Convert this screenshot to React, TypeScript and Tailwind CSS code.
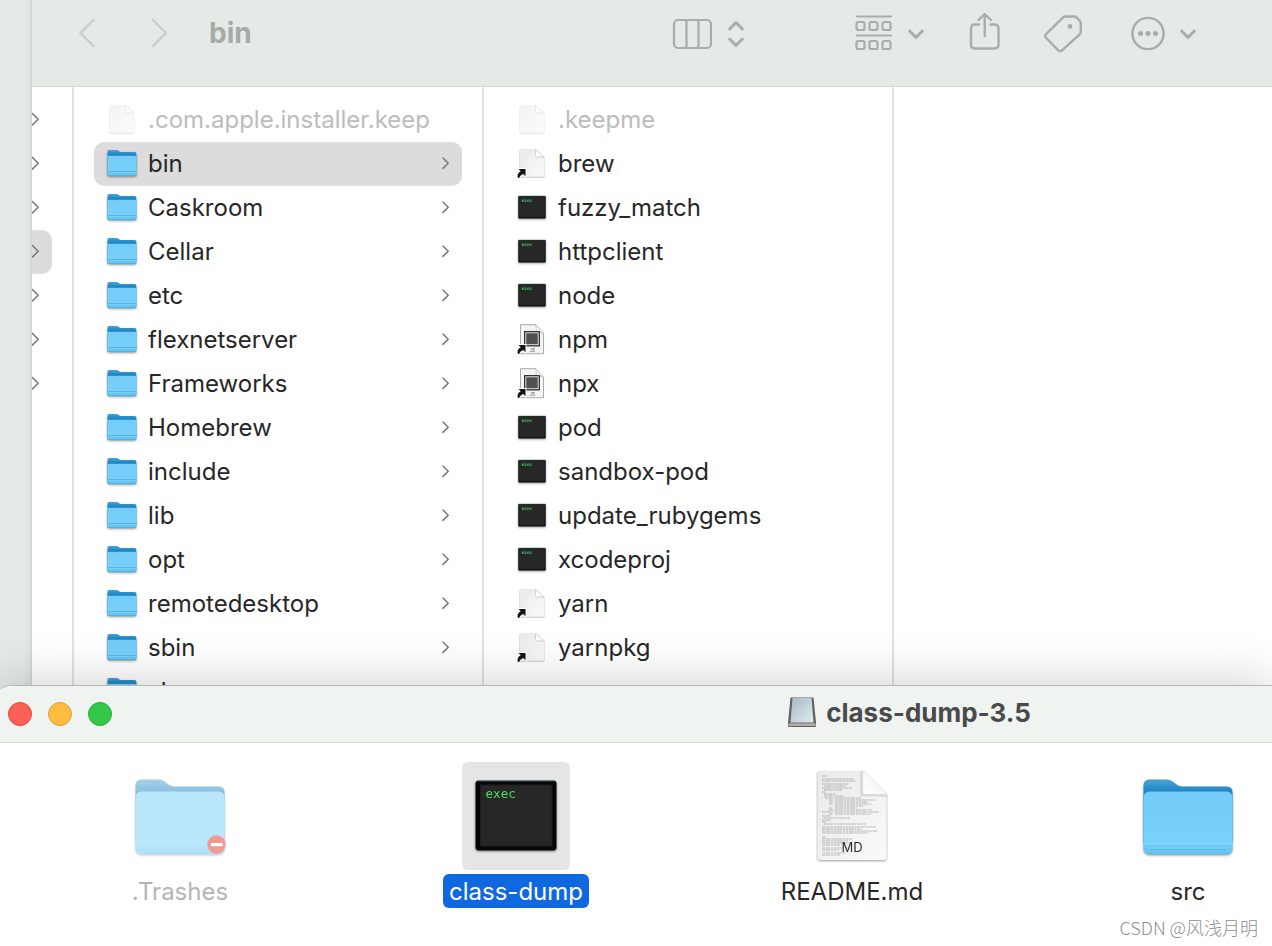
import React, { useState } from 'react';
import clsx from 'clsx';

type Kind = 'folder' | 'doc' | 'alias' | 'exec' | 'js';
type Entry = { name: string; kind: Kind; muted?: boolean };

const folders = [
  'bin', 'Caskroom', 'Cellar', 'etc', 'flexnetserver', 'Frameworks', 'Homebrew',
  'include', 'lib', 'opt', 'remotedesktop', 'sbin', 'share',
];

const parentEntries: Entry[] = [
  { name: '.com.apple.installer.keep', kind: 'doc', muted: true },
  ...folders.map((name) => ({ name, kind: 'folder' as Kind })),
];

const binEntries: Entry[] = [
  { name: '.keepme', kind: 'doc', muted: true },
  { name: 'brew', kind: 'alias' },
  { name: 'fuzzy_match', kind: 'exec' },
  { name: 'httpclient', kind: 'exec' },
  { name: 'node', kind: 'exec' },
  { name: 'npm', kind: 'js' },
  { name: 'npx', kind: 'js' },
  { name: 'pod', kind: 'exec' },
  { name: 'sandbox-pod', kind: 'exec' },
  { name: 'update_rubygems', kind: 'exec' },
  { name: 'xcodeproj', kind: 'exec' },
  { name: 'yarn', kind: 'alias' },
  { name: 'yarnpkg', kind: 'alias' },
];

// text lines of the markdown thumbnail: x, y, width
const docLines = [
  [5, 5, 5], [5, 8, 32], [5, 10, 34], [5, 13, 27], [7, 15, 22], [5, 17, 30], [7, 19, 18],
  [5, 21, 3], [7, 23, 12], [7, 25, 20], [8, 27, 9], [18, 27, 26], [12, 29, 4], [18, 29, 40],
  [12, 31, 5], [18, 31, 33], [12, 33, 4], [18, 33, 36], [18, 35, 28], [12, 37, 3], [18, 37, 22],
  [12, 39, 5], [18, 39, 37], [5, 41, 11], [18, 41, 44], [12, 43, 4], [18, 43, 36], [5, 45, 9],
  [7, 47, 26], [5, 49, 9], [5, 51, 5], [7, 53, 42], [5, 56, 54], [5, 58, 40], [5, 60, 56],
  [5, 62, 47], [5, 66, 4], [5, 68, 30], [5, 70, 26], [5, 72, 28], [5, 74, 18], [5, 77, 20],
  [5, 79, 17], [5, 82, 24], [5, 84, 18],
];

function Gradients() {
  return (
    <svg className="absolute w-0 h-0" aria-hidden="true">
      <defs>
        <linearGradient id="folderBack" x1="0" y1="0" x2="0" y2="1">
          <stop offset="0" stopColor="#4ba4d3" />
          <stop offset="0.22" stopColor="#1580c4" />
          <stop offset="1" stopColor="#1580c4" />
        </linearGradient>
        <linearGradient id="folderFront" x1="0" y1="0" x2="0" y2="1">
          <stop offset="0" stopColor="#74cdf8" />
          <stop offset="0.85" stopColor="#78d1fa" />
          <stop offset="1" stopColor="#62bfee" />
        </linearGradient>
        <linearGradient id="paper" x1="0" y1="0" x2="1" y2="1">
          <stop offset="0" stopColor="#e9e9e9" />
          <stop offset="1" stopColor="#fafafa" />
        </linearGradient>
        <linearGradient id="fold" x1="0" y1="1" x2="1" y2="0">
          <stop offset="0" stopColor="#ffffff" />
          <stop offset="0.5" stopColor="#f7f7f7" />
          <stop offset="1" stopColor="#d0d0d0" />
        </linearGradient>
        <linearGradient id="drive" x1="0" y1="0" x2="1" y2="1">
          <stop offset="0" stopColor="#a9b9c2" />
          <stop offset="1" stopColor="#dcecf3" />
        </linearGradient>
      </defs>
    </svg>
  );
}

function FolderIcon() {
  return (
    <svg className="w-8 h-8 shrink-0 drop-shadow-[0_1px_1px_rgba(0,0,0,0.35)]" viewBox="0 0 32 32">
      <path d="M1.500 4q0-2 1.500-2h7.500q1 0 2 .8l.8.6q.8.600 2 .6h13.300q1.700 0 1.700 1.500V26H1.500z" fill="url(#folderBack)" />
      <path d="M1.500 8.700q0-1 1-1h26.800q1 0 1 1v17.800q0 1.500-1.500 1.500H3q-1.500 0-1.500-1.500z" fill="url(#folderFront)" />
      <path d="M1.500 23.500h28.800" stroke="#4dadde" strokeWidth="0.800" />
      <path d="M1.500 25.500h28.800" stroke="#5bb8e8" strokeWidth="0.600" />
      <path d="M1.700 26.500q.2 1.300 1.500 1.300h25.300q1.500 0 1.700-1.300" fill="none" stroke="#3595c8" strokeWidth="0.600" />
    </svg>
  );
}

function LargeFolderIcon({ locked }: { locked?: boolean }) {
  return (
    <svg className="w-27 h-27" viewBox="0 0 108 108">
      <g className={clsx('drop-shadow-[0_1px_1px_rgba(0,0,0,0.4)]', locked && 'opacity-50')}>
        <path d="M9.500 24q0-6.500 6-6.500h17q3.500 0 6 2l4 3q2.500 2 6 2h44q6 0 6 6v50h-89z" fill="url(#folderBack)" />
        <path d="M9.500 36q0-6.500 6-6.500h77q6 0 6 6.500v50q0 6.500-6 6.500h-77q-6 0-6-6.500z" fill="url(#folderFront)" />
        <path d="M9.500 84h89M9.500 87.500h89" stroke="#5fbcea" strokeWidth="0.800" />
      </g>
      {locked && (
        <g>
          <circle cx="90.500" cy="82.500" r="9.200" fill="#f29a92" />
          <rect x="85" y="81" width="11.500" height="3.200" fill="#fff" />
        </g>
      )}
    </svg>
  );
}

function DocIcon({ alias, muted }: { alias?: boolean; muted?: boolean }) {
  return (
    <svg className="w-8 h-8 shrink-0" viewBox="0 0 32 32">
      <g className={clsx('drop-shadow-[0_1px_0_rgba(0,0,0,0.2)]', muted && 'opacity-50')}>
        <path d="M3.500 2.700q0-1.500 1.500-1.500h14l9.500 8v18q0 1.500-1.500 1.500H5q-1.500 0-1.500-1.500z" fill="url(#paper)" stroke="#e2e2e2" strokeWidth="0.500" />
        <path d="M19.500 1.500V7.700q0 1.300 1.300 1.300h7.400z" fill="#fff" stroke="#c6c6c6" strokeWidth="0.800" />
      </g>
      {alias && <AliasArrow />}
    </svg>
  );
}

function AliasArrow() {
  return (
    <path d="M1.800 30q-1.200-4.500 2.900-6.800L2.500 21h7v7.200l-2.200-2.300q-3.300.8-4.200 4z" fill="#161616" stroke="#fff" strokeWidth="1.800" paintOrder="stroke" />
  );
}

function JsIcon() {
  return (
    <svg className="w-8 h-8 shrink-0" viewBox="0 0 32 32">
      <path d="M4.500.7h15l8 8.500v20.500h-23z" fill="#f4f4f4" stroke="#a2a2a2" strokeWidth="0.900" />
      <path d="M19.500.7q1.500 4 .5 7.500 4-.5 7.500 1z" fill="#fff" stroke="#b5b5b5" strokeWidth="0.700" />
      <rect x="8" y="7" width="16" height="15.500" fill="#343434" />
      <rect x="9.800" y="8.800" width="12.400" height="11.900" fill="#505050" stroke="#eeeeee" strokeWidth="0.900" />
      <text x="13.500" y="28" fontSize="4.600" fill="#555" fontFamily="Inter, sans-serif">JS</text>
      <AliasArrow />
    </svg>
  );
}

function ExecIcon() {
  return (
    <svg className="w-8 h-8 shrink-0 drop-shadow-[0_1px_1px_rgba(0,0,0,0.4)]" viewBox="0 0 32 32">
      <rect x="2.300" y="4" width="27.400" height="22.500" rx="0.500" fill="#0b0b0b" />
      <path d="M2.500 4h27" stroke="#6f8a91" strokeWidth="0.500" />
      <rect x="3.200" y="5" width="25.600" height="20.200" fill="#272727" />
      <text x="5.500" y="10" fontSize="4.600" fontWeight="bold" fill="#3fbf58" fontFamily="'DejaVu Sans Mono', monospace">exec</text>
    </svg>
  );
}

function LargeExecIcon() {
  return (
    <svg className="w-27 h-27 drop-shadow-[0_1px_1px_rgba(0,0,0,0.45)]" viewBox="0 0 108 108">
      <rect x="13.500" y="18.500" width="81" height="70" rx="3" fill="#070707" />
      <path d="M16 18.800h76" stroke="#7f9aa6" strokeWidth="0.800" />
      <rect x="18.500" y="23" width="71.500" height="61" fill="#272727" stroke="#1c1c1c" />
      <text x="23.500" y="36" fontSize="12.600" fill="#4edb69" fontFamily="'DejaVu Sans Mono', monospace">exec</text>
    </svg>
  );
}

function MarkdownIcon() {
  return (
    <svg className="w-27 h-27 drop-shadow-[0_1px_1px_rgba(0,0,0,0.4)]" viewBox="0 0 108 108">
      <path d="M19.500 12q0-3 3-3h42.500l23.500 23v63q0 3-3 3h-63q-3 0-3-3z" fill="url(#paper)" />
      {docLines.map(([x, y, w]) => (
        <path key={`${x}-${y}`} d={`M${19 + x} ${9 + y}h${w}`} stroke="#777" strokeWidth="0.800" strokeDasharray="3 0.500 5 0.700 2 0.500" opacity="0.600" />
      ))}
      <path d="M62 9h3l23.500 23v3L62 34z" fill="#c4c4c4" opacity="0.500" />
      <path d="M65 9l23.500 23H67.500q-2.500 0-2.500-2.500z" fill="url(#fold)" />
      <text x="54" y="90" fontSize="13" textAnchor="middle" fill="#2b2b2b" fontFamily="Inter, sans-serif">MD</text>
    </svg>
  );
}

function DriveIcon() {
  return (
    <svg className="w-8 h-8" viewBox="0 0 32 32">
      <path d="M4.500 0.500h23l2.500 25v3.500q0 1-1 1H3q-1 0-1-1v-3.500z" fill="#686064" />
      <path d="M6.500 1h19l2 24.500h-23z" fill="url(#drive)" />
      <path d="M2.500 26.300h27v2.700h-27z" fill="#b9aaa6" />
      <path d="M27.500 26.800v1.500" stroke="#4be05c" strokeWidth="1.500" />
    </svg>
  );
}

function EntryIcon({ kind, muted }: { kind: Kind; muted?: boolean }) {
  if (kind === 'folder') return <FolderIcon />;
  if (kind === 'exec') return <ExecIcon />;
  if (kind === 'js') return <JsIcon />;
  return <DocIcon alias={kind === 'alias'} muted={muted} />;
}

function RowChevron() {
  return (
    <svg className="w-3 h-4 shrink-0" viewBox="0 0 12 16" fill="none" stroke="#7c7c7c" strokeWidth="1.600" strokeLinecap="round" strokeLinejoin="round">
      <path d="M3 2l5.200 5.200L3 12.400" />
    </svg>
  );
}

function DownChevron() {
  return (
    <svg className="w-4 h-10" viewBox="0 0 16 40" fill="none" stroke="#a7ada8" strokeWidth="3" strokeLinecap="round" strokeLinejoin="round">
      <path d="M1.700 18L8 24.500l6.300-6.500" />
    </svg>
  );
}

function Toolbar() {
  return (
    <header className="flex items-start h-[87px] pt-[13px] pl-[47px] pr-[76px] bg-[#e5eae6] border-b border-[#d3d6d4]">
      <button aria-label="Back" className="w-4 h-10">
        <svg className="w-4 h-10" viewBox="0 0 16 40" fill="none" stroke="#cbd0cc" strokeWidth="2.500" strokeLinecap="round" strokeLinejoin="round">
          <path d="M14.500 7L1.500 20l13 13" />
        </svg>
      </button>
      <button aria-label="Forward" className="w-4 h-10 ml-14">
        <svg className="w-4 h-10" viewBox="0 0 16 40" fill="none" stroke="#cbd0cc" strokeWidth="2.500" strokeLinecap="round" strokeLinejoin="round">
          <path d="M2 7l13 13L2 33" />
        </svg>
      </button>
      <h1 className="flex-1 ml-[42px] text-[28px] leading-10 font-bold text-[#a6aba7]">bin</h1>

      <button aria-label="Column view" className="flex items-center gap-4">
        <svg className="w-10 h-10" viewBox="0 0 40 40" fill="none" stroke="#a7ada8" strokeWidth="2.200">
          <rect x="2" y="7" width="37" height="28" rx="4" />
          <path d="M14.500 7v28M26.500 7v28" />
        </svg>
        <svg className="w-4 h-10" viewBox="0 0 16 40" fill="none" stroke="#a7ada8" strokeWidth="3" strokeLinecap="round" strokeLinejoin="round">
          <path d="M1.700 16L8 9.500l6.300 6.500M1.700 26L8 32.500l6.300-6.500" />
        </svg>
      </button>

      <button aria-label="Group by" className="flex items-center gap-3.5 ml-[110px]">
        <svg className="w-10 h-10" viewBox="0 0 40 40" fill="none" stroke="#a7ada8" strokeWidth="2.200" strokeLinecap="round">
          <path d="M3 3.500h34M3 22.500h34" />
          <rect x="2.500" y="9" width="8" height="8" rx="1.800" />
          <rect x="15.500" y="9" width="8" height="8" rx="1.800" />
          <rect x="28.500" y="9" width="8" height="8" rx="1.800" />
          <rect x="2.500" y="28" width="8" height="8" rx="1.800" />
          <rect x="15.500" y="28" width="8" height="8" rx="1.800" />
          <rect x="28.500" y="28" width="8" height="8" rx="1.800" />
        </svg>
        <DownChevron />
      </button>

      <button aria-label="Share" className="ml-10">
        <svg className="w-10 h-10" viewBox="0 0 40 40" fill="none" stroke="#a7ada8" strokeWidth="2.400" strokeLinecap="round" strokeLinejoin="round">
          <path d="M15 11.500H11q-4 0-4 4v16q0 4 4 4h19.500q4 0 4-4v-16q0-4-4-4H26.500" />
          <path d="M20.700 23V1.500M14.500 7l6.200-6 6.200 6" />
        </svg>
      </button>

      <button aria-label="Tags" className="ml-10">
        <svg className="w-10 h-10" viewBox="0 0 40 40" fill="none" stroke="#a7ada8" strokeWidth="2.400" strokeLinejoin="round">
          <path d="M21.500 3.500h8.500q1.600 0 2.700 1.100l3 3.200q1.100 1.200 1.100 2.800v8q0 1.600-1.100 2.700L18.300 37.200q-2.100 2-4.200 0L2.300 25q-2.100-2.100 0-4.200L18.800 4.600q1.100-1.100 2.700-1.100z" />
          <circle cx="26" cy="13.500" r="2.400" fill="#a7ada8" stroke="none" />
        </svg>
      </button>

      <button aria-label="More actions" className="flex items-center gap-3 ml-11">
        <svg className="w-10 h-10" viewBox="0 0 40 40" fill="none" stroke="#a7ada8" strokeWidth="2.400">
          <circle cx="20" cy="20.500" r="15.600" />
          <g fill="#a7ada8" stroke="none">
            <circle cx="12.500" cy="20.500" r="2.500" />
            <circle cx="20" cy="20.500" r="2.500" />
            <circle cx="27.500" cy="20.500" r="2.500" />
          </g>
        </svg>
        <DownChevron />
      </button>
    </header>
  );
}

function Column({ entries, selected, onSelect }: { entries: Entry[]; selected?: string; onSelect?: (name: string) => void }) {
  return (
    <ul className="w-[410px] shrink-0 px-5 pt-[11px] border-r-2 border-[#e2e2e2]">
      {entries.map((entry) => (
        <li key={entry.name}>
          <button
            onClick={() => onSelect?.(entry.name)}
            className={clsx(
              'w-full h-11 pl-3 pr-2.5 flex items-center gap-2.5 rounded-[10px] text-left text-2xl',
              entry.muted ? 'text-[#bcbcbc]' : 'text-[#272727]',
              selected === entry.name && 'bg-[#dcdcdc]'
            )}
          >
            <EntryIcon kind={entry.kind} muted={entry.muted} />
            <span className="flex-1 whitespace-nowrap">{entry.name}</span>
            {entry.kind === 'folder' && <RowChevron />}
          </button>
        </li>
      ))}
    </ul>
  );
}

function FinderWindow() {
  const [selected, setSelected] = useState('bin');

  return (
    <section className="flex bg-[#e5eae6]">
      <div className="w-8 shrink-0 border-r border-[#cfd4d0] bg-linear-to-r from-[#e5eae6] from-80% to-[#dce1dd]" />
      <div className="flex-1 min-w-0">
        <Toolbar />
        <div className="flex bg-white">
          <ul className="w-[42px] shrink-0 pr-5 pt-[11px] border-r-2 border-[#e2e2e2]">
            {[0, 1, 2, 3, 4, 5, 6].map((i) => (
              <li key={i} className={clsx('h-11 flex items-center justify-center rounded-r-[10px] overflow-hidden', i === 3 && 'bg-[#dcdcdc]')}>
                <svg className="w-5 h-4" viewBox="0 0 20 16" fill="none" stroke="#7c7c7c" strokeWidth="1.600" strokeLinejoin="round">
                  <path d="M0 1l6.200 6.200L0 13.400" />
                </svg>
              </li>
            ))}
          </ul>
          <Column entries={parentEntries} selected={selected} onSelect={setSelected} />
          <Column entries={binEntries} />
        </div>
      </div>
    </section>
  );
}

function IconItem({ name, muted, selected, children }: { name: string; muted?: boolean; selected?: boolean; children: React.ReactNode }) {
  return (
    <button className="w-[152px] flex flex-col items-center gap-1">
      <span className={clsx('rounded-md', selected && 'bg-[#e5e5e5]')}>{children}</span>
      <span
        className={clsx(
          'px-1.5 pt-0.5 rounded-md text-2xl leading-8 whitespace-nowrap',
          muted ? 'text-[#b4b4b4]' : selected ? 'bg-[#1068e1] text-white' : 'text-[#272727]'
        )}
      >
        {name}
      </span>
    </button>
  );
}

function DiskWindow() {
  return (
    <section className="relative z-10 flex-1 -mt-[29px] -ml-2 rounded-tl-[20px] bg-white border-t border-[#b4b7b5] shadow-[0_-4px_50px_rgba(0,0,0,0.18)]">
      <header className="h-[57px] pl-4 pr-[241px] flex items-center rounded-tl-[20px] bg-[#f0f4f1] border-b border-[#d5d8d6]">
        <div className="flex gap-4">
          <button aria-label="Close" className="w-6 h-6 rounded-full bg-[#fe5f57] border border-[#e2463f]" />
          <button aria-label="Minimise" className="w-6 h-6 rounded-full bg-[#febc40] border border-[#dfa033]" />
          <button aria-label="Zoom" className="w-6 h-6 rounded-full bg-[#34c84a] border border-[#24aa36]" />
        </div>
        <h2 className="ml-auto pb-0.5 flex items-center gap-2 text-[26px] leading-8 font-bold text-[#4a4a4a]">
          <DriveIcon />
          class-dump-3.5
        </h2>
      </header>
      <div className="pt-[19px] pl-28 pr-2 flex justify-between">
        <IconItem name=".Trashes" muted>
          <LargeFolderIcon locked />
        </IconItem>
        <IconItem name="class-dump" selected>
          <LargeExecIcon />
        </IconItem>
        <IconItem name="README.md">
          <MarkdownIcon />
        </IconItem>
        <IconItem name="src">
          <LargeFolderIcon />
        </IconItem>
      </div>
      <p className="absolute right-3.5 bottom-[7px] text-[18px] leading-6 font-light text-[#8f8f8f] font-['Noto_Sans_CJK_SC',sans-serif]">
        CSDN @风浅月明
      </p>
    </section>
  );
}

export default function App() {
  return (
    <main className="min-h-screen flex flex-col overflow-hidden bg-white font-[Inter,'Liberation_Sans',sans-serif]">
      <Gradients />
      <FinderWindow />
      <DiskWindow />
    </main>
  );
}
